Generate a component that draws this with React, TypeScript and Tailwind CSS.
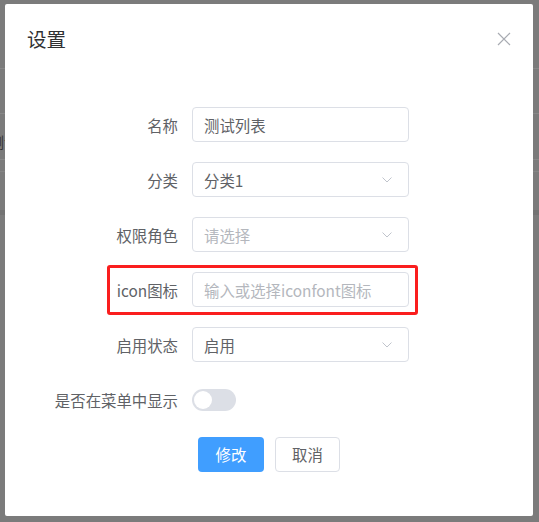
import React from "react";

const font = { fontFamily: '"Noto Sans CJK SC", "Noto Sans", sans-serif' };

function Chevron() {
  return (
    <svg width="10" height="6" viewBox="0 0 10 6" fill="none">
      <polyline points="0.5,0.5 5,5 9.5,0.5" stroke="#c0c4cc" strokeWidth="1" />
    </svg>
  );
}

function Row({ label, children }: { label: string; children: React.ReactNode }) {
  return (
    <div className="flex items-center h-[35px] mb-[20px]">
      <div className="w-[173px] text-right text-[15.4px] leading-[20px] text-[#606266] shrink-0">{label}</div>
      <div className="ml-[14px]">{children}</div>
    </div>
  );
}

function Box({ text, placeholder, select }: { text?: string; placeholder?: string; select?: boolean }) {
  return (
    <div className="w-[217px] h-[35px] border border-[#dcdfe6] rounded-[4px] flex items-center pl-[11px] pr-[16px] bg-white">
      <span className={"flex-1 text-[15.4px] leading-[20px] " + (text ? "text-[#606266]" : "text-[#b4b7bd]")}>
        {text ?? placeholder}
      </span>
      {select && <Chevron />}
    </div>
  );
}

export default function App() {
  return (
    <div className="relative w-[539px] h-[522px] overflow-hidden bg-[#7b7b7b]" style={font}>
      <div className="absolute inset-0">
        <div className="absolute left-0 top-[68px] w-full h-px bg-[#888888]" />
        <div className="absolute left-0 top-[113px] w-full h-px bg-[#888888]" />
        <div className="absolute left-0 top-[159px] w-full h-px bg-[#888888]" />
        <div className="absolute left-0 top-[171px] w-full h-px bg-[#858585]" />
        <div className="absolute left-0 top-[210px] w-full h-[5px] bg-[#737373]" />
        <div className="absolute left-[-11px] top-[132px] text-[15px] leading-[20px] text-[#333]">测试</div>
      </div>
      <div className="relative pl-[5px] pt-[4px]">
        <div className="w-[528px] h-[512px] bg-white rounded-[2px]">
          <div className="flex items-center justify-between pl-[22px] pr-[22px] pt-[22px]">
            <div className="text-[19.5px] leading-[26px] text-[#303133]">设置</div>
            <svg width="14" height="14" viewBox="0 0 14 14" fill="none">
              <path d="M1 1L13 13M13 1L1 13" stroke="#a8abb2" strokeWidth="1.2" />
            </svg>
          </div>
          <div className="mt-[55px]">
            <Row label="名称">
              <Box text="测试列表" />
            </Row>
            <Row label="分类">
              <Box text="分类1" select />
            </Row>
            <Row label="权限角色">
              <Box placeholder="请选择" select />
            </Row>
            <div className="relative">
              <div className="absolute left-[102px] top-[-7px] w-[311px] h-[50px] border-[3px] border-[#fa1e1e] rounded-[3px]" />
              <Row label="icon图标">
                <Box placeholder="输入或选择iconfont图标" />
              </Row>
            </div>
            <Row label="启用状态">
              <Box text="启用" select />
            </Row>
            <Row label="是否在菜单中显示">
              <div className="w-[44px] h-[22px] rounded-full bg-[#dcdfe6] flex items-center pl-[2px]">
                <div className="w-[18px] h-[18px] rounded-full bg-white" />
              </div>
            </Row>
            <div className="flex justify-center gap-[11px]">
              <div className="w-[66px] h-[35px] rounded-[4px] bg-[#409eff] text-white text-[15.4px] flex items-center justify-center">
                修改
              </div>
              <div className="w-[65px] h-[35px] rounded-[4px] border border-[#dcdfe6] bg-white text-[#606266] text-[15.4px] flex items-center justify-center">
                取消
              </div>
            </div>
          </div>
        </div>
      </div>
    </div>
  );
}
